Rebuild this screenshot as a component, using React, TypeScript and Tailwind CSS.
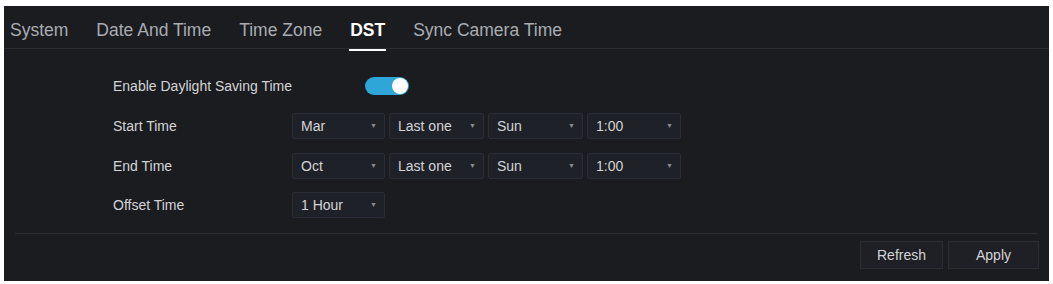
import React from "react";

function Select({ value, w }: { value: string; w: string }) {
  return (
    <div
      className={`${w} h-[26px] flex items-center justify-between pl-[8px] pr-[7px] bg-[#1f2128] border border-[#2a2d35] rounded-[2px] text-[14px] text-[#d4d4d6]`}
    >
      <span>{value}</span>
      <span className="text-[7px] text-[#8a8d94]">▼</span>
    </div>
  );
}

export default function App() {
  const tabs = ["System", "Date And Time", "Time Zone", "DST", "Sync Camera Time"];
  return (
    <div
      className="w-[1053px] h-[284px] bg-white pt-[6px] pl-[4px] pr-[4px]"
      style={{ fontFamily: '"Liberation Sans", Arial, sans-serif' }}
    >
      <div className="w-[1045px] h-[275px] bg-[#1a1c20] flex flex-col">
        <div className="h-[43px] flex items-end pl-[6px] border-b border-[#2a2d33]">
          {tabs.map((t) => (
            <div
              key={t}
              className={`relative h-full flex items-center pt-[6px] px-[14px] text-[17.5px] ${
                t === "DST" ? "text-white font-bold" : "text-[#a9acb2]"
              } ${t === "System" ? "pl-[0px]" : ""}`}
            >
              {t}
              {t === "DST" && (
                <div className="absolute bottom-[-3px] left-[13px] right-[13px] h-[2px] bg-white" />
              )}
            </div>
          ))}
        </div>
        <div className="flex flex-col pt-[19px] pl-[109px]">
          <div className="h-[40px] flex items-center -mt-[2px]">
            <div className="w-[252px] text-[14px] text-[#d4d4d6]">Enable Daylight Saving Time</div>
            <div className="w-[44px] h-[18px] rounded-full bg-[#2ea6d8] relative">
              <div className="absolute right-[1px] top-[1px] w-[16px] h-[16px] rounded-full bg-white" />
            </div>
          </div>
          <div className="h-[40px] flex items-center">
            <div className="w-[179px] text-[14px] text-[#d4d4d6]">Start Time</div>
            <div className="flex gap-[4px]">
              <Select value="Mar" w="w-[93px]" />
              <Select value="Last one" w="w-[95px]" />
              <Select value="Sun" w="w-[95px]" />
              <Select value="1:00" w="w-[94px]" />
            </div>
          </div>
          <div className="h-[40px] flex items-center">
            <div className="w-[179px] text-[14px] text-[#d4d4d6]">End Time</div>
            <div className="flex gap-[4px]">
              <Select value="Oct" w="w-[93px]" />
              <Select value="Last one" w="w-[95px]" />
              <Select value="Sun" w="w-[95px]" />
              <Select value="1:00" w="w-[94px]" />
            </div>
          </div>
          <div className="h-[38px] flex items-center">
            <div className="w-[179px] text-[14px] text-[#d4d4d6]">Offset Time</div>
            <Select value="1 Hour" w="w-[93px]" />
          </div>
        </div>
        <div className="mt-[9px] mx-[11px] border-t border-[#2a2d33]" />
        <div className="flex justify-end gap-[5px] pr-[10px] pt-[7px]">
          <div className="w-[83px] h-[28px] flex items-center justify-center bg-[#1e2025] border border-[#2a2d33] text-[14px] text-[#d4d4d6]">
            Refresh
          </div>
          <div className="w-[91px] h-[28px] flex items-center justify-center bg-[#1e2025] border border-[#2a2d33] text-[14px] text-[#d4d4d6]">
            Apply
          </div>
        </div>
      </div>
    </div>
  );
}
